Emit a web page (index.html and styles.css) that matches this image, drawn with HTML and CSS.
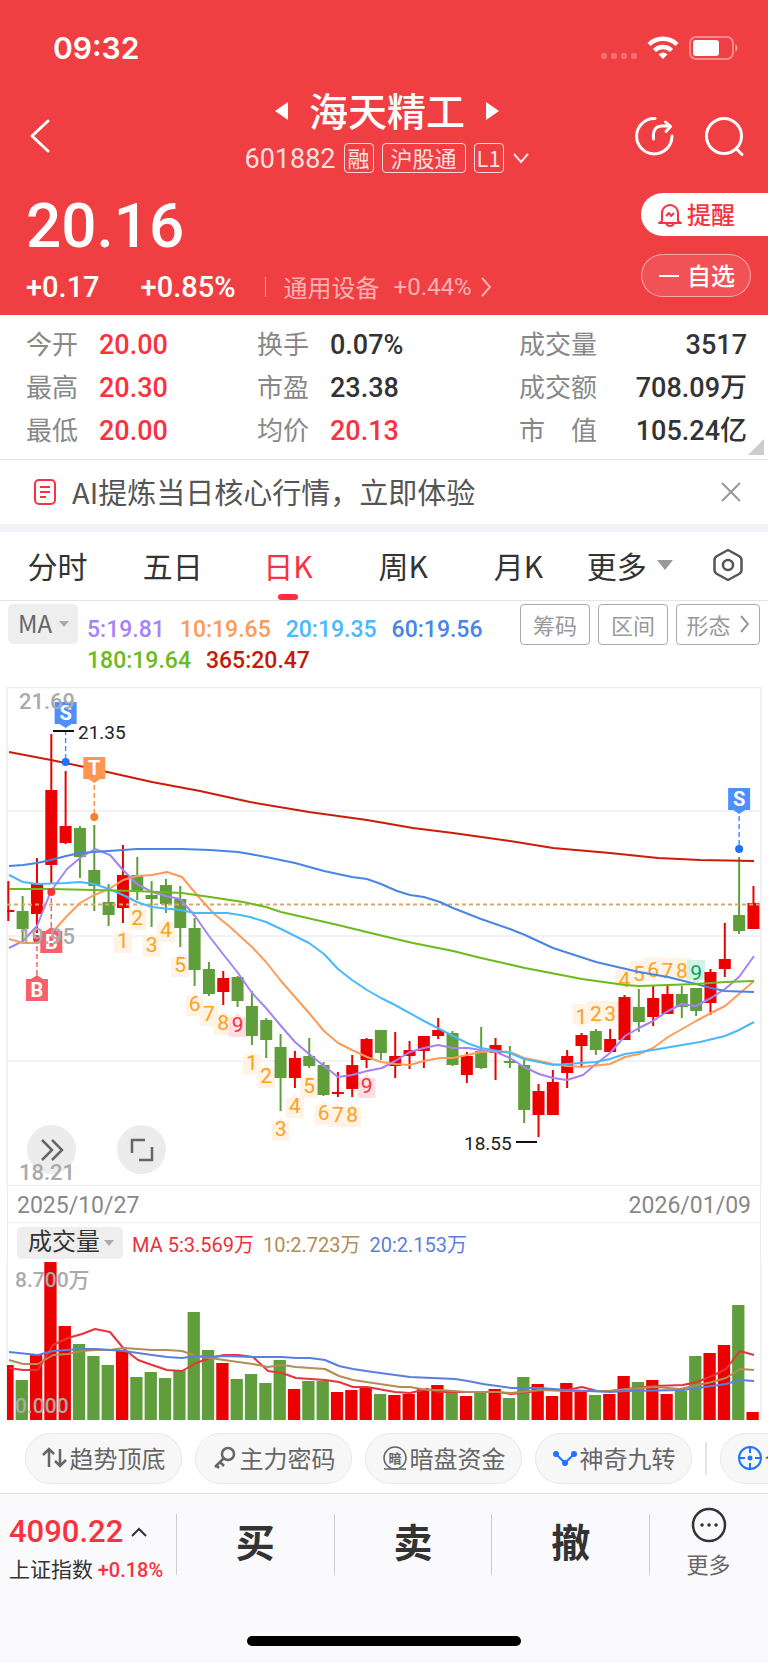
FILE: index.html
```
<!DOCTYPE html>
<html lang="zh-CN">
<head>
    <meta charset="UTF-8">
    <meta name="viewport" content="width=device-width, initial-scale=1.0">
    <title>海天精工 601882</title>
    <link rel="stylesheet" href="styles.css">
</head>
<body>
    <div class="app">
        <header class="header">
            <div class="status-bar">
                <span class="clock">09:32</span>
                <div class="status-icons">
                    <svg width="36" height="6" viewBox="0 0 36 6" fill="#fff" opacity=".25"><rect width="6" height="6" rx="2"/><rect x="10" width="6" height="6" rx="2"/><rect x="20" width="6" height="6" rx="2"/><rect x="30" width="6" height="6" rx="2"/></svg>
                    <svg class="wifi" width="32" height="24" viewBox="0 0 32 24" fill="none" stroke="#fff" stroke-width="4.4"><path d="M2 8.500a20 20 0 0 1 28 0"/><path d="M7.500 14.500a12 12 0 0 1 17 0"/><path d="M16 23l-4.500-4.600a6.500 6.500 0 0 1 9 0z" fill="#fff" stroke="none"/></svg>
                    <svg class="battery" width="50" height="24" viewBox="0 0 50 24"><rect x="1" y="1" width="43" height="22" rx="6" fill="none" stroke="#fff" stroke-opacity=".4" stroke-width="2"/><rect x="4" y="4" width="26" height="16" rx="3" fill="#fff"/><path d="M46.500 8q4 4 0 8z" fill="#fff" fill-opacity=".5"/></svg>
                </div>
            </div>

            <div class="nav">
                <button class="icon-btn back" aria-label="返回">
                    <svg width="20" height="34" viewBox="0 0 20 34" fill="none" stroke="#fff" stroke-width="3" stroke-linecap="round" stroke-linejoin="round"><path d="M18 2L2 17l16 15"/></svg>
                </button>
                <div class="stock">
                    <div class="stock-name">
                        <svg width="14" height="18" viewBox="0 0 14 18" fill="#fff"><path d="M13 0v18L0 9z"/></svg>
                        <h1>海天精工</h1>
                        <svg width="14" height="18" viewBox="0 0 14 18" fill="#fff"><path d="M1 0v18l13-9z"/></svg>
                    </div>
                    <div class="stock-code">
                        <span class="num">601882</span>
                        <span class="tag">融</span>
                        <span class="tag wide">沪股通</span>
                        <span class="tag">L1</span>
                        <svg width="18" height="11" viewBox="0 0 18 11" fill="none" stroke="#fff" stroke-opacity=".85" stroke-width="2"><path d="M2 1l7 8 7-8"/></svg>
                    </div>
                </div>
                <div class="nav-actions">
                    <button class="icon-btn" aria-label="分享">
                        <svg width="40" height="40" viewBox="0 0 40 40" fill="none" stroke="#fff" stroke-width="3" stroke-linecap="round" stroke-linejoin="round"><path d="M21 2.500A17.700 17.700 0 1 0 38 20"/><path d="M19.500 23c-1-8 2-13 8.500-13h8"/><path d="M31.500 6l5 4.500-4.500 5"/></svg>
                    </button>
                    <button class="icon-btn" aria-label="搜索">
                        <svg width="40" height="40" viewBox="0 0 40 40" fill="none" stroke="#fff" stroke-width="3" stroke-linecap="round"><circle cx="20" cy="20" r="17.500"/><path d="M32 32.500l6 6"/></svg>
                    </button>
                </div>
            </div>

            <div class="quote">
                <div class="quote-left">
                    <div class="price">20.16</div>
                    <div class="change">
                        <span>+0.17</span>
                        <span class="percent">+0.85%</span>
                        <a class="sector" href="#">通用设备 <span class="num">+0.44%</span>
                            <svg width="11" height="20" viewBox="0 0 11 20" fill="none" stroke="currentColor" stroke-width="2"><path d="M1 1l8 9-8 9"/></svg>
                        </a>
                    </div>
                </div>
                <div class="quote-right">
                    <button class="pill alert">
                        <svg width="24" height="24" viewBox="0 0 24 24" fill="none" stroke="currentColor" stroke-width="2" stroke-linejoin="round"><path d="M4 18V10a8 8 0 0 1 16 0v8l3 2H1z"/><path d="M8 13l3-3 2 3 3-3"/><path d="M8 21q4 4 8 0"/></svg>
                        <span>提醒</span>
                    </button>
                    <button class="pill watch">
                        <svg width="20" height="4" viewBox="0 0 20 4" fill="#fff"><rect y="1" width="20" height="2"/></svg>
                        <span>自选</span>
                    </button>
                </div>
            </div>
        </header>

        <section class="stats">
            <dl>
                <div><dt>今开</dt><dd class="up">20.00</dd></div>
                <div><dt>最高</dt><dd class="up">20.30</dd></div>
                <div><dt>最低</dt><dd class="up">20.00</dd></div>
            </dl>
            <dl>
                <div><dt>换手</dt><dd>0.07%</dd></div>
                <div><dt>市盈</dt><dd>23.38</dd></div>
                <div><dt>均价</dt><dd class="up">20.13</dd></div>
            </dl>
            <dl class="totals">
                <div><dt>成交量</dt><dd>3517</dd></div>
                <div><dt>成交额</dt><dd>708.09万</dd></div>
                <div><dt>市　值</dt><dd>105.24亿</dd></div>
            </dl>
            <span class="corner"></span>
        </section>

        <section class="ai-bar">
            <svg width="22" height="26" viewBox="0 0 22 26" fill="none" stroke="#f9323f" stroke-width="2"><rect x="1" y="1" width="20" height="24" rx="4"/><path d="M6 8h10M6 13h10M6 18h6"/></svg>
            <a href="#">AI提炼当日核心行情，立即体验</a>
            <button class="icon-btn" aria-label="关闭">
                <svg width="20" height="20" viewBox="0 0 20 20" fill="none" stroke="#999" stroke-width="2"><path d="M1 1l18 18M19 1L1 19"/></svg>
            </button>
        </section>

        <nav class="tabs">
            <button>分时</button>
            <button>五日</button>
            <button class="active">日K</button>
            <button>周K</button>
            <button>月K</button>
            <button class="more">更多 <span class="caret"></span></button>
            <button class="settings" aria-label="设置">
                <svg width="30" height="34" viewBox="0 0 30 34" fill="none" stroke="#555" stroke-width="2.500" stroke-linejoin="round"><path d="M15 2l11 6q2.500 1.500 2.500 4v10q0 2.500-2.500 4l-11 6-11-6q-2.500-1.500-2.500-4V12q0-2.500 2.500-4z"/><circle cx="15" cy="17" r="5"/></svg>
            </button>
        </nav>

        <section class="indicators">
            <div class="select-box">
                <select class="ma-select" aria-label="主图指标"><option>MA</option></select>
                <span class="caret"></span>
            </div>
            <div class="ma-values">
                <span class="ma5">5:19.81</span>
                <span class="ma10">10:19.65</span>
                <span class="ma20">20:19.35</span>
                <span class="ma60">60:19.56</span>
                <span class="ma180">180:19.64</span>
                <span class="ma365">365:20.47</span>
            </div>
            <div class="tools">
                <button>筹码</button>
                <button>区间</button>
                <button class="shape">形态
                    <svg width="10" height="18" viewBox="0 0 10 18" fill="none" stroke="currentColor" stroke-width="2"><path d="M1 1l7 8-7 8"/></svg>
                </button>
            </div>
        </section>

        <section class="k-chart">
            <button class="round forward" aria-label="快进">
                <svg width="24" height="24" viewBox="0 0 24 24" fill="none" stroke="#666" stroke-width="2.500"><path d="M2 2l10 10L2 22M12 2l10 10-10 10"/></svg>
            </button>
            <button class="round expand" aria-label="全屏">
                <svg width="24" height="24" viewBox="0 0 24 24" fill="none" stroke="#666" stroke-width="2.500"><path d="M2 15V2h13M22 9v13H9"/></svg>
            </button>
            <svg id="kChart" viewBox="0 0 768 499"></svg>
        </section>
        <div class="dates"><span>2025/10/27</span><span>2026/01/09</span></div>
        <section class="volume">
            <div class="volume-head">
                <div class="select-box">
                    <select class="volume-select" aria-label="副图指标"><option>成交量</option></select>
                    <span class="caret"></span>
                </div>
                <span class="vol5">MA 5:3.569万</span>
                <span class="vol10">10:2.723万</span>
                <span class="vol20">20:2.153万</span>
            </div>
            <svg id="volumeChart" viewBox="0 0 768 158"></svg>
        </section>

        <div class="chips">
            <button>
                <svg width="26" height="24" viewBox="0 0 26 24" fill="none" stroke="#666" stroke-width="2.500"><path d="M7 21V3M1 9l6-6 5 5M18 3v17M13 15l5 5 6-6"/></svg>趋势顶底
            </button>
            <button>
                <svg width="26" height="24" viewBox="0 0 26 24" fill="none" stroke="#666" stroke-width="2.500"><circle cx="16" cy="8" r="6"/><path d="M12 12L3 21M8 16l4 4M4 19l3 3"/></svg>主力密码
            </button>
            <button>
                <svg width="26" height="24" viewBox="0 0 26 24" fill="none" stroke="#666" stroke-width="1.500"><circle cx="13" cy="12" r="11"/><path d="M2 23h22"/><text class="icon-text" x="13" y="17" text-anchor="middle">暗</text></svg>暗盘资金
            </button>
            <button>
                <svg width="26" height="24" viewBox="0 0 26 24" fill="#1f74ff" stroke="#1f74ff" stroke-width="2"><path d="M4 8l9 9 9-9" fill="none"/><circle cx="4" cy="8" r="2"/><circle cx="13" cy="17" r="2"/><circle cx="22" cy="8" r="2"/></svg>神奇九转
            </button>
            <span class="split"></span>
            <button>
                <svg width="26" height="24" viewBox="0 0 26 24" fill="none" stroke="#1f74ff" stroke-width="2"><circle cx="13" cy="12" r="11"/><path d="M13 1v6M13 17v6M2 12h6M18 12h6"/><circle cx="13" cy="12" r="1.500" fill="#1f74ff"/></svg>个股诊断
            </button>
        </div>

        <footer class="footer">
            <div class="actions">
                <div class="index">
                    <div class="index-value">4090.22
                        <svg width="16" height="10" viewBox="0 0 16 10" fill="none" stroke="#333" stroke-width="2"><path d="M1 9l7-7 7 7"/></svg>
                    </div>
                    <div class="index-name">上证指数 <span class="up">+0.18%</span></div>
                </div>
                <button class="trade">买</button>
                <button class="trade">卖</button>
                <button class="trade">撤</button>
                <button class="more-btn">
                    <svg width="36" height="36" viewBox="0 0 36 36" fill="none" stroke="#333" stroke-width="2.500"><circle cx="18" cy="18" r="16"/><path d="M11 18h.1M18 18h.1M25 18h.1" stroke-width="3.500" stroke-linecap="round"/></svg>
                    更多
                </button>
            </div>
            <div class="home-indicator"></div>
        </footer>
    </div>
    <script src="chart.js"></script>
</body>
</html>
```
FILE: styles.css
```
* {
    box-sizing: border-box;
}

body {
    margin: 0;
    font-family: "Noto Sans CJK SC", sans-serif;
    background-color: #fafafc;
    color: #333;
}

button,
select {
    margin: 0;
    padding: 0;
    border: none;
    background: none;
    color: inherit;
    font-family: inherit;
    font-size: inherit;
    cursor: pointer;
}

a {
    color: inherit;
    text-decoration: none;
}

svg {
    display: block;
    flex-shrink: 0;
}

.app {
    display: flex;
    flex-direction: column;
    min-height: 100vh;
    overflow: hidden;
    background-color: #fff;
}

.num {
    font-family: Roboto, sans-serif;
}

.up {
    color: #f9323f;
}

.icon-btn {
    display: flex;
}

.caret {
    display: inline-block;
    border: 5px solid transparent;
    border-top: 6px solid #aaa;
    border-bottom: none;
}

/* header */
.header {
    height: 315px;
    background-color: #f03f42;
    color: #fff;
}

.status-bar {
    display: flex;
    justify-content: space-between;
    align-items: center;
    height: 84px;
    padding: 11px 29px 0 53px;
}

.clock {
    font-family: Inter, sans-serif;
    font-size: 30px;
    font-weight: 600;
}

.status-icons {
    display: flex;
    align-items: center;
    gap: 10px;
}

.status-icons svg:first-child {
    margin-top: 16px;
}

.nav {
    display: grid;
    grid-template-columns: 1fr auto 1fr;
    align-items: center;
    height: 96px;
    padding: 0 24px 0 30px;
}

.nav-actions {
    display: flex;
    justify-content: flex-end;
    gap: 30px;
    margin-top: 8px;
}

.back {
    margin-top: 8px;
}

.stock-name,
.stock-code {
    display: flex;
    align-items: center;
    justify-content: center;
}

.stock-name {
    gap: 20px;
    height: 53px;
}

.stock-name h1 {
    margin: 0;
    padding-bottom: 4px;
    font-size: 39px;
    font-weight: 500;
    line-height: 50px;
}

.stock-code {
    gap: 8px;
    height: 43px;
    color: rgba(255, 255, 255, 0.85);
    font-size: 27px;
}

.tag {
    display: flex;
    align-items: center;
    justify-content: center;
    min-width: 30px;
    height: 30px;
    margin-bottom: 2px;
    padding-bottom: 2px;
    border: 1px solid rgba(255, 255, 255, 0.8);
    border-radius: 4px;
    font-size: 22px;
    line-height: 26px;
}

.tag.wide {
    padding: 0 8px 2px;
}

.quote {
    display: flex;
    justify-content: space-between;
}

.quote-left {
    padding: 10px 0 0 26px;
    font-family: Roboto, sans-serif;
    font-weight: 500;
}

.price {
    font-size: 62px;
    line-height: 72px;
}

.change {
    display: flex;
    align-items: center;
    margin-top: 7px;
    font-size: 29px;
    line-height: 36px;
}

.percent {
    margin-left: 41px;
}

.sector {
    display: flex;
    align-items: center;
    gap: 14px;
    margin-left: 29px;
    padding-left: 18px;
    border-left: 1px solid rgba(255, 255, 255, 0.5);
    color: rgba(255, 255, 255, 0.6);
    font-family: "Noto Sans CJK SC", sans-serif;
    font-size: 24px;
    font-weight: 400;
    line-height: 20px;
}

.sector svg {
    margin-left: -5px;
}

.quote-right {
    display: flex;
    flex-direction: column;
    gap: 18px;
    padding-top: 13px;
}

.pill {
    display: flex;
    align-items: center;
    gap: 5px;
    width: 127px;
    height: 43px;
    padding-left: 17px;
    border-radius: 22px;
    font-size: 24px;
    font-weight: 500;
}

.pill span {
    padding-bottom: 2px;
}

.alert {
    border-radius: 22px 0 0 22px;
    background-color: #fff;
    color: #f9323f;
}

.watch {
    gap: 8px;
    width: 110px;
    border: 1px solid rgba(255, 255, 255, 0.5);
    background-color: rgba(255, 255, 255, 0.1);
}

/* key figures */
.stats {
    position: relative;
    display: grid;
    grid-template-columns: 231px 1fr 228px;
    padding: 8px 21px 7px 26px;
    border-bottom: 1px solid #e4e4e4;
}

.stats dl {
    margin: 0;
}

.stats dl > div {
    display: flex;
    align-items: center;
    gap: 21px;
    height: 43px;
}

.stats dt {
    padding-bottom: 4px;
    color: #888;
    font-size: 26px;
}

.stats dd {
    margin: 0;
    font-family: Roboto, "Noto Sans CJK SC", sans-serif;
    font-size: 27px;
    font-weight: 500;
}

.stats .totals > div {
    justify-content: space-between;
    gap: 0;
}

.totals dd {
    line-height: 32px;
}

.corner {
    position: absolute;
    right: 4px;
    bottom: 4px;
    border-left: 16px solid transparent;
    border-bottom: 16px solid #ccc;
}

.ai-bar {
    display: flex;
    align-items: center;
    gap: 16px;
    height: 72px;
    padding: 0 27px 0 34px;
    border-bottom: 8px solid #f2f3f9;
    color: #555;
    font-size: 29px;
}

.ai-bar a {
    flex: 1;
    padding-bottom: 2px;
}

/* period tabs */
.tabs {
    display: grid;
    grid-template-columns: repeat(5, 15fr) 14fr 11fr;
    height: 69px;
    border-bottom: 1px solid #e4e4e4;
    font-size: 30px;
}

.tabs button {
    display: flex;
    align-items: center;
    justify-content: center;
    padding-bottom: 2px;
}

.tabs .active {
    position: relative;
    color: #f9323f;
}

.tabs .active::after {
    content: "";
    position: absolute;
    bottom: 0;
    width: 20px;
    height: 6px;
    border-radius: 3px;
    background-color: #f9323f;
}

.tabs .more {
    gap: 10px;
}

.tabs .settings {
    padding-left: 5px;
}

.tabs .caret {
    border-width: 10px 8px 0;
    border-top-color: #999;
}

/* indicator row */
.indicators {
    display: flex;
    align-items: flex-start;
    height: 86px;
    padding: 3px 8px 0;
}

.select-box {
    position: relative;
    border-radius: 5px;
    background-color: #eee;
}

.select-box select {
    display: block;
    appearance: none;
}

.select-box .caret {
    position: absolute;
    right: 9px;
    top: 50%;
    margin-top: -3px;
    pointer-events: none;
}

.ma-select {
    width: 70px;
    height: 40px;
    padding: 0 0 4px 10px;
    color: #666;
    font-size: 24px;
}

.ma-values {
    display: flex;
    flex: 1;
    flex-wrap: wrap;
    column-gap: 15px;
    padding: 10px 0 0 9px;
    font-family: Roboto, sans-serif;
    font-size: 23px;
    font-weight: 500;
    line-height: 31px;
}

.ma5 { color: #a583f5; }
.ma10 { color: #ff9a57; }
.ma20 { color: #48b9ff; }
.ma60 { color: #4786e5; }
.ma180 { color: #6cba1e; }
.ma365 { color: #c41a08; }

.tools {
    display: flex;
    gap: 8px;
}

.tools button {
    display: flex;
    align-items: center;
    justify-content: center;
    gap: 9px;
    width: 70px;
    height: 41px;
    padding-bottom: 2px;
    border: 1px solid #aaa;
    border-radius: 4px;
    color: #999;
    font-size: 22px;
}

.tools .shape {
    width: 84px;
}

/* charts */
.k-chart {
    position: relative;
}

.k-chart > svg {
    position: relative;
    width: 100%;
    pointer-events: none;
}

.round {
    position: absolute;
    bottom: 12px;
    display: flex;
    align-items: center;
    justify-content: center;
    width: 49px;
    height: 49px;
    border-radius: 50%;
    background-color: #ececec;
}

.forward {
    left: 27px;
}

.expand {
    left: 117px;
}

.dates {
    display: flex;
    align-items: center;
    justify-content: space-between;
    height: 37px;
    margin: 0 7px;
    padding: 2px 9px 0;
    border: 1px solid #eee;
    border-top: none;
    color: #888;
    font-family: Roboto, sans-serif;
    font-size: 23px;
}

.volume-head {
    display: flex;
    align-items: center;
    gap: 9px;
    height: 39px;
    margin: 0 7px;
    padding: 0 9px;
    border: 1px solid #eee;
    border-top: none;
    border-bottom: none;
    font-family: Roboto, "Noto Sans CJK SC", sans-serif;
    font-size: 20px;
}

.volume-head span {
    padding-top: 1px;
}

.volume-select {
    width: 106px;
    height: 32px;
    padding: 0 0 5px 11px;
    font-family: "Noto Sans CJK SC", sans-serif;
    font-size: 24px;
    line-height: 26px;
}

.vol5 { color: #e8333c; }
.vol10 { color: #b38d55; }
.vol20 { color: #5b7fe0; }

.volume > svg {
    width: 100%;
}

.axis-label {
    fill: #aaa;
    font-family: Roboto, "Noto Sans CJK SC", sans-serif;
    font-size: 22px;
    font-weight: 500;
}

.volume .axis-label {
    font-size: 21px;
}

.peak-label {
    fill: #222;
    font-family: Roboto, sans-serif;
    font-size: 19px;
}

.count {
    font-family: Roboto, sans-serif;
    font-size: 21px;
    text-anchor: middle;
}

.flag {
    fill: #fff;
    font-family: Roboto, sans-serif;
    font-size: 20px;
    font-weight: 700;
    text-anchor: middle;
}

.line {
    fill: none;
    stroke-width: 2;
    stroke-linejoin: round;
}

/* shortcuts */
.chips {
    display: flex;
    align-items: center;
    gap: 13px;
    height: 74px;
    padding: 3px 0 0 25px;
    border-bottom: 1px solid #ddd;
    overflow: hidden;
}

.chips button {
    display: flex;
    flex-shrink: 0;
    align-items: center;
    justify-content: center;
    gap: 2px;
    width: 157px;
    height: 51px;
    padding-bottom: 1px;
    border: 1px solid #e8e8e8;
    border-radius: 26px;
    background-color: #f7f7f7;
    color: #666;
    font-size: 24px;
    white-space: nowrap;
}

.split {
    flex-shrink: 0;
    width: 2px;
    height: 33px;
    background-color: #e4e4e4;
}

.icon-text {
    fill: #666;
    stroke: none;
    font-size: 13px;
    font-weight: 700;
}

/* trade bar */
.footer {
    flex: 1;
    display: flex;
    flex-direction: column;
    background-color: #fafafc;
}

.actions {
    display: flex;
    height: 80px;
    margin-top: 10px;
}

.index {
    width: 176px;
    padding: 4px 0 0 9px;
    white-space: nowrap;
}

.index-value {
    display: flex;
    align-items: center;
    gap: 8px;
    color: #f9323f;
    font-family: Roboto, sans-serif;
    font-size: 31px;
    font-weight: 500;
    line-height: 47px;
}

.index-name {
    font-size: 21px;
    line-height: 26px;
}

.index-name .up {
    font-family: Roboto, sans-serif;
    font-size: 20px;
    font-weight: 500;
}

.trade {
    flex: 1;
    height: 61px;
    margin-top: 10px;
    padding-bottom: 8px;
    border-left: 1px solid #ccc;
    font-size: 39px;
    font-weight: 700;
    line-height: 53px;
}

.more-btn {
    position: relative;
    display: flex;
    flex-direction: column;
    align-items: center;
    gap: 3px;
    width: 119px;
    padding-top: 3px;
    color: #666;
    font-size: 22px;
    line-height: 34px;
}

.more-btn::before {
    content: "";
    position: absolute;
    left: 0;
    top: 10px;
    height: 61px;
    border-left: 1px solid #ccc;
}

.home-indicator {
    width: 274px;
    height: 10px;
    margin: auto auto 17px;
    border-radius: 5px;
    background-color: #000;
}
```
FILE: chart.js
```
const RED = '#ec0000';
const GREEN = '#5f9e3a';
const STEP = 14.33;

// [rising, high, body top, body bottom, low]
const candles = [
    [1, 194, 223, 225, 234], [0, 209, 224, 242, 254], [1, 171, 197, 227, 246], [1, 47, 103, 178, 196],
    [1, 84, 139, 156, 157], [0, 139, 141, 170, 191], [0, 138, 183, 199, 224], [0, 197, 215, 228, 239],
    [1, 158, 188, 221, 236], [0, 170, 188, 204, 213], [0, 194, 208, 212, 240], [0, 192, 198, 217, 226],
    [0, 199, 212, 241, 260], [0, 231, 241, 283, 299], [0, 275, 282, 307, 309], [1, 284, 291, 305, 318],
    [0, 289, 290, 314, 320], [0, 304, 319, 349, 358], [0, 331, 333, 353, 371], [0, 347, 360, 391, 424],
    [1, 364, 371, 391, 401], [0, 351, 369, 379, 381], [0, 375, 378, 408, 409], [1, 385, 405, 407, 410],
    [1, 368, 378, 402, 410], [1, 351, 352, 373, 381], [0, 343, 343, 366, 373], [1, 345, 369, 379, 391],
    [1, 354, 363, 369, 382], [1, 349, 349, 364, 381], [1, 331, 343, 349, 352], [0, 344, 346, 378, 379],
    [1, 365, 369, 388, 396], [0, 340, 364, 381, 382], [1, 351, 358, 366, 393], [0, 359, 374, 376, 381],
    [0, 372, 378, 423, 436], [1, 397, 404, 428, 450], [1, 383, 395, 428, 428], [1, 363, 369, 386, 401],
    [1, 346, 348, 359, 381], [0, 342, 344, 363, 368], [1, 342, 352, 365, 365], [1, 308, 310, 353, 353],
    [0, 302, 320, 335, 345], [1, 299, 311, 330, 339], [1, 299, 307, 327, 327], [0, 299, 307, 320, 331],
    [0, 301, 301, 324, 329], [1, 282, 285, 316, 328], [1, 236, 272, 282, 290], [0, 170, 228, 244, 247],
    [1, 199, 216, 242, 242]
];

const averages = {
    '#a583f5': '9,261 23,254 37,239 51,204 67,182 80,171 95,162 110,168 123,183 137,197 152,205 166,209 180,212 195,229 209,249 223,267 238,286 252,306 266,321 281,339 295,355 309,367 324,379 338,390 352,388 367,384 382,381 395,374 410,365 424,361 438,358 453,361 468,361 481,363 496,365 510,371 524,380 539,387 553,391 567,393 583,388 596,377 610,366 625,349 639,341 653,334 668,324 682,317 696,319 711,311 725,302 739,290 754,269',
    '#ff9a57': '9,252 23,256 38,256 51,247 66,230 80,216 94,208 109,202 123,193 137,189 152,188 167,185 182,190 197,208 213,226 230,240 252,260 266,275 281,294 309,326 324,344 338,356 352,363 367,370 381,375 395,377 410,378 424,374 440,371 453,371 467,368 481,365 496,364 510,365 524,371 539,374 553,377 567,379 582,380 610,377 625,370 639,367 653,361 668,350 682,342 696,334 711,326 725,319 739,307 754,294',
    '#48b9ff': '9,188 23,195 37,197 66,196 80,195 94,197 109,202 123,208 137,215 152,220 180,223 195,226 227,226 240,228 250,230 266,235 281,242 295,249 309,256 324,267 338,282 352,293 367,303 381,311 395,318 424,334 453,349 467,356 481,361 510,366 524,372 539,375 553,378 567,377 596,375 610,372 625,367 653,363 682,358 700,355 725,349 739,343 754,335',
    '#4786e5': '9,179 23,178 37,176 51,173 66,169 80,166 94,165 137,162 182,162 210,163 238,165 250,167 266,170 295,176 324,184 352,190 367,192 381,197 397,204 410,208 424,210 440,215 453,221 481,232 510,242 525,248 553,261 596,275 639,285 668,290 696,297 711,301 725,304 754,305',
    '#6cba1e': '9,202 51,202 94,203 133,204 182,206 210,210 243,215 266,220 281,225 338,238 383,249 413,256 453,264 481,271 525,281 582,292 625,298 639,299 668,298 696,297 725,295 754,294',
    '#cc1c08': '9,65 51,73 94,82 152,95 200,104 250,115 309,125 367,133 413,141 453,146 510,154 553,161 610,166 658,171 700,173 754,174'
};

// [candle, digit centre, digit, side]
const counts = [
    [8, 254, 1], [9, 231, 2], [10, 258, 3], [11, 243, 4], [12, 278, 5], [13, 317, 6], [14, 327, 7],
    [15, 336, 8], [16, 338, 9], [17, 376, 1], [18, 389, 2], [19, 442, 3], [20, 419, 4], [21, 399, 5],
    [22, 426, 6], [23, 428, 7], [24, 428, 8], [25, 399, 9], [40, 330, 1, 'top'], [41, 327, 2, 'top'],
    [42, 327, 3, 'top'], [43, 293, 4, 'top'], [44, 287, 5, 'top'], [45, 283, 6, 'top'],
    [46, 284, 7, 'top'], [47, 284, 8, 'top'], [48, 286, 9, 'top']
];

// [candle, letter, box top, dot, box colour, dot colour]
const flags = [
    [4, 'S', 15, 75, '#4d8fff', '#1f74ff'],
    [6, 'T', 70, 130, '#ff9650', '#ff7f27'],
    [3, 'B', 244, 205, '#f9606c', '#f5333f'],
    [2, 'B', 292, 252, '#f9606c', '#f5333f'],
    [51, 'S', 101, 162, '#4d8fff', '#1f74ff']
];

const candleX = i => 8.3 + i * STEP;

function drawKChart() {
    let out = '';
    for (const y of [0.5, 124, 249, 374, 498.5]) {
        out += `<path d="M7 ${y}H761" stroke="#eee" stroke-width="1.5"/>`;
    }
    out += '<path d="M7 0V499M761 0V499" stroke="#eee" stroke-width="1.5"/>';

    for (const [i, y, digit, side] of counts) {
        const top = side === 'top';
        const nine = top ? ['#d3f1e4', '#00a862'] : ['#ffdfe2', '#f5333f'];
        const [bg, fg] = digit === 9 ? nine : ['#fff3e5', '#ff9f1c'];
        const x = candleX(i);
        const boxTop = top ? y - 13 : y - 8;
        const tip = top
            ? `M${x - 4} ${boxTop + 20}h8l-4 4z`
            : `M${x - 4} ${boxTop}h8l-4 -4z`;
        out += `<rect x="${x - 9}" y="${boxTop}" width="18" height="20" fill="${bg}"/>
            <path d="${tip}" fill="${bg}"/>
            <text class="count" x="${x}" y="${y + 7}" fill="${fg}">${digit}</text>`;
    }

    candles.forEach(([up, high, top, bottom, low], i) => {
        const color = up ? RED : GREEN;
        const x = candleX(i);
        const left = Math.max(x - 6, 7);
        out += `<path d="M${x} ${high}V${low}" stroke="${color}" stroke-width="2"/>
            <rect x="${left}" y="${top}" width="${x + 6 - left}" height="${bottom - top}" fill="${color}"/>`;
    });

    out += '<path d="M7 217.5H761" stroke="#d8a868" stroke-width="2" stroke-dasharray="4 3"/>';
    for (const color in averages) {
        out += `<polyline class="line" points="${averages[color]}" stroke="${color}"/>`;
    }

    for (const [i, letter, top, dot, boxColor, dotColor] of flags) {
        const x = candleX(i);
        const below = top > dot;
        const from = below ? top - 4 : top + 28;
        const tip = below ? `M${x - 6} ${top}h12l-6 -4z` : `M${x - 6} ${top + 22}h12l-6 4z`;
        out += `<path d="M${x} ${from}V${dot}" stroke="${boxColor}" stroke-width="1.5" stroke-dasharray="5 3"/>
            <circle cx="${x}" cy="${dot}" r="4" fill="${dotColor}"/>
            <rect x="${x - 11}" y="${top}" width="22" height="22" fill="${boxColor}"/>
            <path d="${tip}" fill="${boxColor}"/>
            <text class="flag" x="${x}" y="${top + 18}">${letter}</text>`;
    }

    out += `<path d="M53 44H74M516 455H537" stroke="#111" stroke-width="2"/>
        <text class="peak-label" x="78" y="52">21.35</text>
        <text class="peak-label" x="464" y="463">18.55</text>
        <text class="axis-label" x="19" y="22">21.69</text>
        <text class="axis-label" x="19" y="257">19.95</text>
        <text class="axis-label" x="19" y="493">18.21</text>`;
    document.getElementById('kChart').innerHTML = out;
}

// top edge of each bar
const volumeTops = [
    103, 118, 92, 0, 64, 82, 94, 103, 89, 115, 110, 116, 108, 50, 88, 101, 117, 112, 121, 98,
    127, 119, 119, 130, 128, 125, 132, 133, 132, 127, 123, 130, 134, 131, 127, 136, 115, 122, 134, 121,
    130, 133, 132, 114, 120, 118, 132, 129, 94, 91, 83, 43, 150
];
// days that closed lower
const volumeDown = [1, 5, 6, 7, 9, 10, 11, 12, 13, 14, 16, 17, 18, 19, 21, 22, 26, 31, 33, 35, 36, 41, 44, 47, 48, 51];

const volumeAverages = {
    '#e8333c': '9,106 23,108 38,108 53,83 68,76 82,72 95,67 110,70 124,87 138,98 152,103 167,108 182,109 196,101 210,96 224,93 238,93 253,95 268,109 282,111 296,116 325,118 339,120 353,125 367,125 395,130 410,131 427,127 440,130 467,130 497,130 511,132 530,130 540,128 567,128 582,125 597,129 610,129 627,127 655,124 683,123 697,120 712,114 726,107 740,89 754,93',
    '#b38d55': '9,98 23,102 38,102 53,93 68,92 82,89 95,88 110,88 124,86 152,88 167,88 182,89 196,94 224,98 238,100 253,102 268,105 282,103 296,105 325,107 339,114 353,118 400,125 410,125 427,128 440,128 467,130 497,130 511,131 540,128 567,129 610,129 627,127 655,125 680,127 712,120 726,116 740,107 754,108',
    '#5b7fe0': '9,90 38,93 53,89 80,87 97,87 124,89 152,93 167,95 182,96 196,94 210,95 224,94 253,95 282,95 296,96 310,96 325,98 339,104 353,107 373,110 410,115 455,117 468,119 483,122 511,126 540,126 567,128 610,130 627,129 683,128 712,124 726,122 740,118 754,119'
};

function drawVolume() {
    let out = '<path d="M7 0V158M761 0V158" stroke="#eee" stroke-width="1.5"/>';
    volumeTops.forEach((top, i) => {
        const x = 7.3 + i * STEP;
        const left = Math.max(x - 6, 7);
        const color = volumeDown.includes(i) ? GREEN : RED;
        out += `<rect x="${left}" y="${top}" width="${x + 6.3 - left}" height="${158 - top}" fill="${color}"/>`;
    });
    for (const color in volumeAverages) {
        out += `<polyline class="line" points="${volumeAverages[color]}" stroke="${color}"/>`;
    }
    out += `<text class="axis-label" x="15" y="25">8.700万</text>
        <text class="axis-label" x="15" y="151">0.000</text>`;
    document.getElementById('volumeChart').innerHTML = out;
}

drawKChart();
drawVolume();
```
